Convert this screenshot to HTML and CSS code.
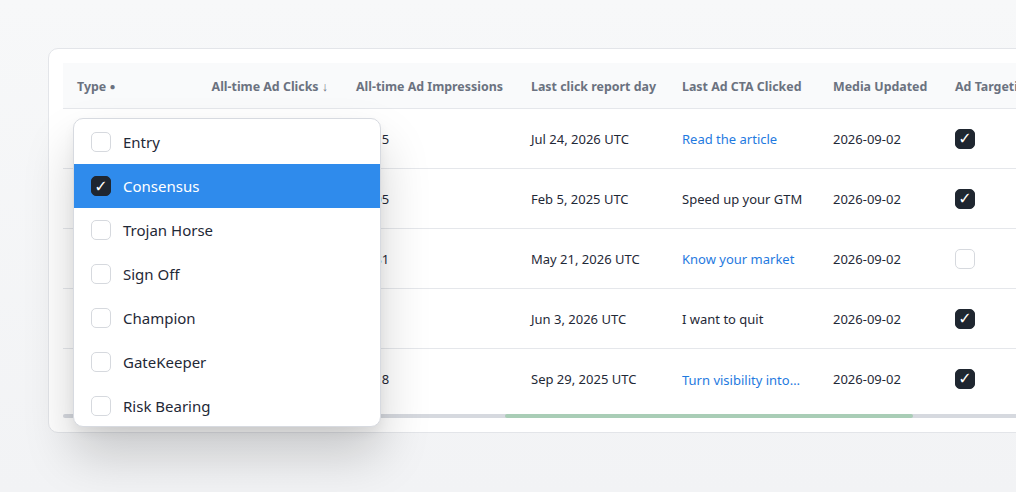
FILE: index.html
```html
<!DOCTYPE html>
<html>
<head>
<meta charset="utf-8">
<link rel="stylesheet" href="styles.css">
</head>
<body>
<div class="card">
  <div class="table-wrap">
    <table class="grid">
      <colgroup>
        <col class="c-type"><col class="c-clicks"><col class="c-imp"><col class="c-day"><col class="c-cta"><col class="c-media"><col class="c-target">
      </colgroup>
      <thead>
        <tr>
          <th>Type <span class="dot">●</span></th>
          <th class="num">All-time Ad Clicks <span class="arrow">↓</span></th>
          <th>All-time Ad Impressions</th>
          <th>Last click report day</th>
          <th>Last Ad CTA Clicked</th>
          <th>Media Updated</th>
          <th>Ad Targeting</th>
        </tr>
      </thead>
      <tbody>
        <tr>
          <td></td><td class="num"></td><td class="imp">4,215</td><td>Jul 24, 2026 UTC</td>
          <td><span class="link">Read the article</span></td><td>2026-09-02</td>
          <td><span class="box on">✓</span></td>
        </tr>
        <tr>
          <td></td><td class="num"></td><td class="imp">2,905</td><td>Feb 5, 2025 UTC</td>
          <td>Speed up your GTM</td><td>2026-09-02</td>
          <td><span class="box on">✓</span></td>
        </tr>
        <tr>
          <td></td><td class="num"></td><td class="imp">1,781</td><td>May 21, 2026 UTC</td>
          <td><span class="link">Know your market</span></td><td>2026-09-02</td>
          <td><span class="box"></span></td>
        </tr>
        <tr>
          <td></td><td class="num"></td><td class="imp"></td><td>Jun 3, 2026 UTC</td>
          <td>I want to quit</td><td>2026-09-02</td>
          <td><span class="box on">✓</span></td>
        </tr>
        <tr>
          <td></td><td class="num"></td><td class="imp">3,318</td><td>Sep 29, 2025 UTC</td>
          <td><span class="link ellip">Turn visibility into…</span></td><td>2026-09-02</td>
          <td><span class="box on">✓</span></td>
        </tr>
      </tbody>
    </table>
  </div>
  <div class="scrollbar"><div class="thumb"></div></div>

  <div class="menu">
    <div class="opt"><span class="mbox"></span>Entry</div>
    <div class="opt sel"><span class="mbox on">✓</span>Consensus</div>
    <div class="opt"><span class="mbox"></span>Trojan Horse</div>
    <div class="opt"><span class="mbox"></span>Sign Off</div>
    <div class="opt"><span class="mbox"></span>Champion</div>
    <div class="opt"><span class="mbox"></span>GateKeeper</div>
    <div class="opt"><span class="mbox"></span>Risk Bearing</div>
  </div>
</div>
</body>
</html>
```

FILE: styles.css
```css
html, body {
  margin: 0;
  padding: 0;
}
body {
  width: 1016px;
  height: 492px;
  overflow: hidden;
  background: linear-gradient(180deg, #f7f8f9 0%, #f2f3f5 100%);
  font-family: "Noto Sans", "Open Sans", "Liberation Sans", sans-serif;
  color: #1f2937;
  padding: 48px 0 0 48px;
  box-sizing: border-box;
}
.card {
  position: relative;
  width: 1100px;
  background: #fff;
  border: 1px solid #e3e5e9;
  border-radius: 10px;
  padding: 14px 0 14px 14px;
  box-sizing: border-box;
}
.table-wrap {
  overflow: hidden;
}
.grid {
  border-collapse: collapse;
  table-layout: fixed;
  width: 1100px;
  font-size: 13px;
}
.c-type { width: 132px; }
.c-clicks { width: 147px; }
.c-imp { width: 175px; }
.c-day { width: 151px; }
.c-cta { width: 151px; }
.c-media { width: 122px; }
.c-target { width: 222px; }
.grid th {
  height: 45px;
  background: #f9fafb;
  color: #6b7280;
  font-weight: 700;
  font-size: 12.4px;
  text-align: left;
  padding: 2px 14px 0;
  border-bottom: 1px solid #e5e7eb;
  white-space: nowrap;
  box-sizing: border-box;
}
.grid th.num, .grid td.num { text-align: right; }
.dot { font-size: 10px; vertical-align: 1px; }
.arrow { font-weight: 400; }
.grid td {
  height: 60px;
  padding: 2px 14px 0;
  border-bottom: 1px solid #e5e7eb;
  white-space: nowrap;
  overflow: hidden;
  box-sizing: border-box;
}
.grid tbody tr:last-child td { border-bottom: none; }
.link { color: #1f7ae0; }
.ellip {
  display: inline-block;
  max-width: 125px;
  overflow: hidden;
  vertical-align: middle;
}
.box {
  display: inline-flex;
  align-items: center;
  justify-content: center;
  width: 20px;
  height: 20px;
  border-radius: 5px;
  border: 1px solid #d6d9de;
  box-sizing: border-box;
  vertical-align: middle;
  font-size: 16px;
  font-family: "DejaVu Sans", sans-serif;
  color: #fff;
  margin-top: -3px;
}
.box.on {
  background: #1f2630;
  border-color: #1f2630;
}
.scrollbar {
  margin-top: 6px;
  height: 4px;
  background: #d6d9df;
  border-radius: 2px 0 0 2px;
  position: relative;
}
.thumb {
  position: absolute;
  left: 442px;
  width: 408px;
  top: 0;
  height: 4px;
  background: #a9cdb6;
  border-radius: 2px;
}
.menu {
  position: absolute;
  left: 24px;
  top: 69px;
  width: 308px;
  height: 309px;
  background: #fff;
  border: 1px solid #d7dae0;
  border-radius: 10px;
  box-sizing: border-box;
  padding-top: 1px;
  box-shadow: 0 28px 50px rgba(0, 0, 0, 0.18), 0 6px 12px rgba(0, 0, 0, 0.05);
  overflow: hidden;
}
.opt {
  display: flex;
  align-items: center;
  height: 44px;
  padding-left: 17px;
  font-size: 15px;
  color: #1f2937;
}
.opt.sel {
  background: #2f8bec;
  color: #fff;
}
.mbox {
  width: 20px;
  height: 20px;
  border: 1px solid #d6d9de;
  border-radius: 5px;
  box-sizing: border-box;
  margin-right: 12px;
  display: inline-flex;
  align-items: center;
  justify-content: center;
  font-size: 16px;
  font-family: "DejaVu Sans", sans-serif;
  color: #fff;
  background: #fff;
}
.mbox.on {
  background: #1f2630;
  border-color: #1f2630;
}
```
